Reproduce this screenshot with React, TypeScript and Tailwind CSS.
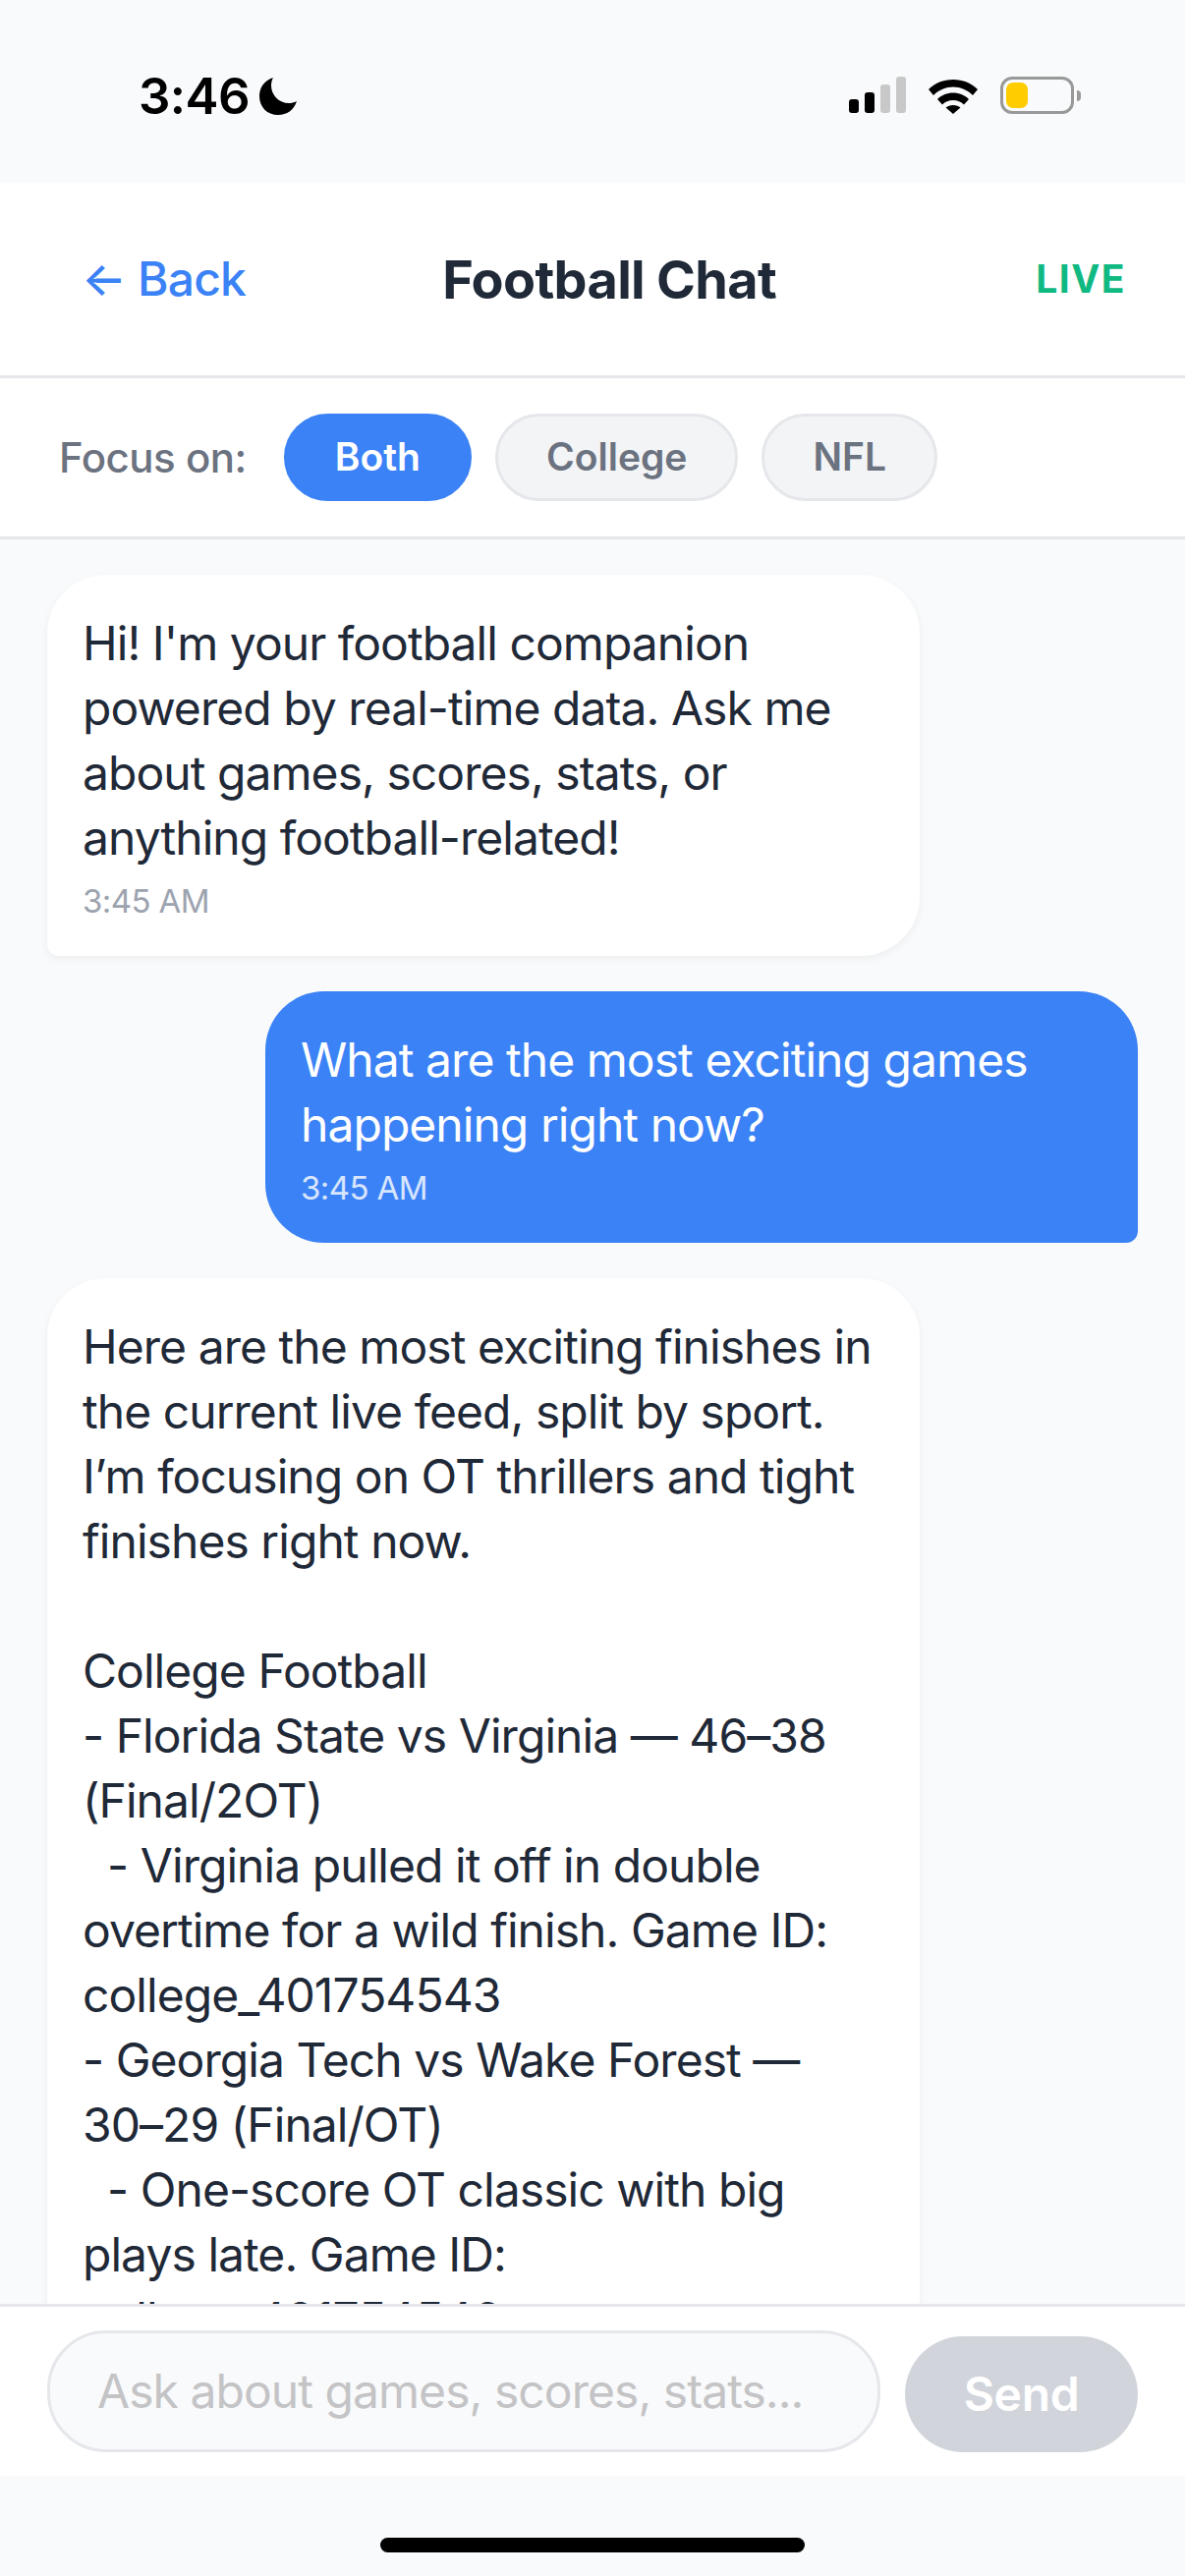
const font = "font-['Inter','Noto_Sans',sans-serif]";

function Moon() {
  return (
    <svg width="40" height="40" viewBox="0 0 40 40" className="ml-[9px] -mt-[1px]">
      <path d="M15 1 C6 4 1 11 1 20 C1 31 9 39 20 39 C29 39 36 34 39 25 C36 26.5 33.5 27 31 27 C21 27 13 19 13 9 C13 6.2 13.8 3.4 15 1 Z" fill="#000" />
    </svg>
  );
}

function Wifi() {
  return (
    <svg width="52" height="38" viewBox="0 0 52 38">
      <path d="M1 13 C7.5 6.5 16 3 26 3 C36 3 44.5 6.5 51 13 L46 19 C40.500 13.500 33.500 10.500 26 10.500 C18.500 10.500 11.500 13.500 6 19 Z" fill="#000" />
      <path d="M10 23 C14 19 19.500 16.500 26 16.500 C32.500 16.500 38 19 42 23 L37 28.500 C34 25.500 30.500 24 26 24 C21.500 24 18 25.500 15 28.500 Z" fill="#000" />
      <path d="M18.500 31.500 C20.500 30 23 29 26 29 C29 29 31.500 30 33.500 31.500 L26 38 Z" fill="#000" />
    </svg>
  );
}

function Status() {
  return (
    <div className="h-[186px] shrink-0 bg-[#f9fafb] flex items-start justify-between pl-[141px] pr-[106px] pt-[78px]">
      <div className="flex items-center h-[40px]">
        <span className={`text-[51px] leading-[40px] font-semibold tracking-[-0.6px] text-black ${font}`}>3:46</span>
        <Moon />
      </div>
      <div className="flex items-start">
        <div className="flex items-end gap-[6px] h-[38px] mr-[22px] pb-[1px]">
          <div className="w-[10px] h-[14px] rounded-[3px] bg-black" />
          <div className="w-[10px] h-[21px] rounded-[3px] bg-black" />
          <div className="w-[10px] h-[29px] rounded-[3px] bg-[#c8c8c8]" />
          <div className="w-[10px] h-[37px] rounded-[3px] bg-[#c8c8c8]" />
        </div>
        <Wifi />
        <div className="ml-[22px] w-[75px] h-[38px] rounded-[12px] border-[3px] border-[#999999] p-[3px]">
          <div className="w-[22px] h-full rounded-[7px] bg-[#ffcc00]" />
        </div>
        <div className="ml-[3px] mt-[14px] w-[4px] h-[11px] rounded-r-full bg-[#999999]" />
      </div>
    </div>
  );
}

function Pill({ label, active }: { label: string; active?: boolean }) {
  return (
    <div
      className={`h-[89px] px-[49px] rounded-full flex items-center justify-center border-[3px] text-[39px] font-semibold ${
        active ? "bg-[#3b82f6] border-[#3b82f6] text-white" : "bg-[#f3f4f6] border-[#e5e7eb] text-[#6b7280]"
      }`}
    >
      {label}
    </div>
  );
}

const first = "Hi! I'm your football companion powered by real-time data. Ask me about games, scores, stats, or anything football-related!";
const second = `Here are the most exciting finishes in the current live feed, split by sport. I’m focusing on OT thrillers and tight finishes right now.

College Football
- Florida State vs Virginia — 46–38 (Final/2OT)
  - Virginia pulled it off in double overtime for a wild finish. Game ID: college_401754543
- Georgia Tech vs Wake Forest — 30–29 (Final/OT)
  - One-score OT classic with big plays late. Game ID: college_401754546`;

export default function App() {
  return (
    <div className={`w-[1206px] h-[2622px] flex flex-col bg-[#f9fafb] overflow-hidden ${font}`}>
      <Status />
      <header className="h-[199px] shrink-0 bg-white border-b-[3px] border-[#e5e7eb] flex items-center justify-between pl-[83px] pr-[60px]">
        <div className="text-[48px] font-medium tracking-[-0.8px] text-[#3b82f6]">← Back</div>
        <div className="text-[54px] font-bold tracking-[-0.7px] text-[#1f2937]">Football Chat</div>
        <div className="w-[156px] text-right text-[39px] font-bold tracking-[1.5px] text-[#10b981]">LIVE</div>
      </header>
      <div className="h-[164px] shrink-0 bg-white border-b-[3px] border-[#e5e7eb] flex items-center pl-[60px] gap-[24px]">
        <span className="text-[42px] font-medium tracking-[-0.5px] text-[#6b7280] mr-[14px]">Focus on:</span>
        <Pill label="Both" active />
        <Pill label="College" />
        <Pill label="NFL" />
      </div>
      <main className="flex-1 min-h-0 overflow-hidden px-[48px] pt-[36px] flex flex-col gap-[36px]">
        <div className="self-start w-[888px] shrink-0 bg-white rounded-[60px] rounded-bl-[12px] px-[36px] pt-[37px] pb-[35px] shadow-[0_3px_9px_rgba(0,0,0,0.05)]">
          <p className="text-[48px] leading-[66px] tracking-[-0.95px] text-[#1f2937]">{first}</p>
          <p className="text-[33px] leading-[40px] mt-[11px] pb-[1px] tracking-[-0.6px] text-[#9ca3af]">3:45 AM</p>
        </div>
        <div className="self-end w-[888px] shrink-0 bg-[#3b82f6] rounded-[60px] rounded-br-[12px] px-[36px] pt-[37px] pb-[35px]">
          <p className="text-[48px] leading-[66px] tracking-[-0.95px] text-white">What are the most exciting games happening right now?</p>
          <p className="text-[33px] leading-[40px] mt-[11px] pb-[1px] tracking-[-0.6px] text-white/80">3:45 AM</p>
        </div>
        <div className="self-start w-[888px] shrink-0 bg-white rounded-[60px] rounded-bl-[12px] px-[36px] pt-[37px] pb-[35px] shadow-[0_3px_9px_rgba(0,0,0,0.05)]">
          <p className="text-[48px] leading-[66px] tracking-[-0.95px] text-[#1f2937] whitespace-pre-wrap">{second}</p>
        </div>
      </main>
      <div className="h-[175px] shrink-0 bg-white border-t-[3px] border-[#e5e7eb] flex items-start px-[48px] pt-[24px] gap-[25px]">
        <div className="w-[848px] h-[124px] rounded-[60px] bg-[#f9fafb] border-[3px] border-[#e5e7eb] flex items-center pl-[48px] text-[48px] tracking-[-0.95px] text-[#c4c4c6]">
          Ask about games, scores, stats...
        </div>
        <div className="mt-[6px] w-[237px] h-[118px] rounded-full bg-[#d1d5db] flex items-center justify-center text-[48px] font-semibold tracking-[-0.3px] text-white">
          Send
        </div>
      </div>
      <div className="h-[102px] shrink-0 bg-[#f9fafb] flex justify-center pt-[63px]">
        <div className="w-[432px] h-[15px] rounded-full bg-black" />
      </div>
    </div>
  );
}
